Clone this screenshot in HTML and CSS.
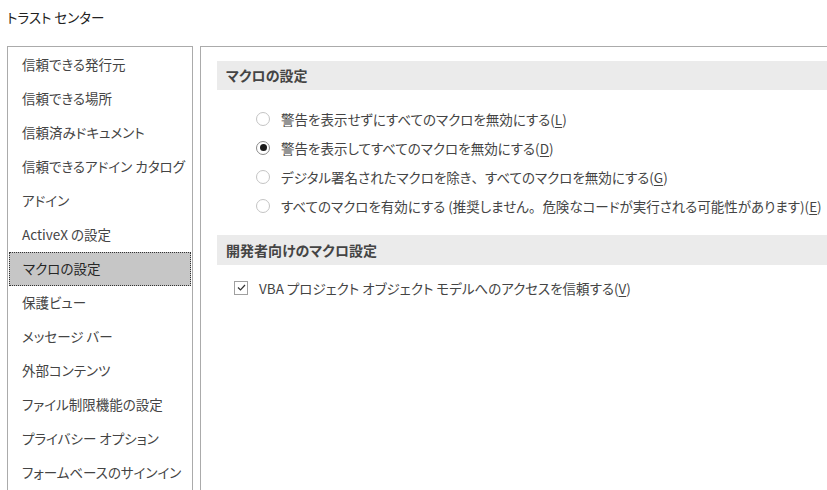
FILE: index.html
```html
<!DOCTYPE html>
<html lang="ja">
<head>
<meta charset="utf-8">
<link rel="stylesheet" href="styles.css">
</head>
<body>
<div class="title">トラスト センター</div>
<div class="panes">
  <ul class="nav">
    <li>信頼できる発行元</li>
    <li>信頼できる場所</li>
    <li>信頼済みドキュメント</li>
    <li>信頼できるアドイン カタログ</li>
    <li>アドイン</li>
    <li>ActiveX の設定</li>
    <li class="selected">マクロの設定</li>
    <li>保護ビュー</li>
    <li>メッセージ バー</li>
    <li>外部コンテンツ</li>
    <li>ファイル制限機能の設定</li>
    <li>プライバシー オプション</li>
    <li>フォームベースのサインイン</li>
    <li>&nbsp;</li>
  </ul>
  <div class="content">
    <div class="section-head">マクロの設定</div>
    <div class="options">
      <div class="opt"><span class="radio"></span><span>警告を表示せずにすべてのマクロを無効にする(<u>L</u>)</span></div>
      <div class="opt"><span class="radio checked"></span><span>警告を表示してすべてのマクロを無効にする(<u>D</u>)</span></div>
      <div class="opt"><span class="radio"></span><span>デジタル署名されたマクロを除き<span class="fw">、</span>すべてのマクロを無効にする(<u>G</u>)</span></div>
      <div class="opt"><span class="radio"></span><span>すべてのマクロを有効にする (推奨しません<span class="fw">。</span>危険なコードが実行される可能性があります)(<u>E</u>)</span></div>
    </div>
    <div class="section-head second">開発者向けのマクロ設定</div>
    <div class="checks">
      <div class="opt"><span class="check"><svg width="9" height="7" viewBox="0 0 9 7"><path d="M1 3.5 L3.5 6 L8 1" fill="none" stroke="#333" stroke-width="1.2"/></svg></span><span>VBA プロジェクト オブジェクト モデルへのアクセスを信頼する(<u>V</u>)</span></div>
    </div>
  </div>
</div>
</body>
</html>
```
FILE: styles.css
```css
html, body {
  margin: 0;
  padding: 0;
  background: #ffffff;
  overflow: hidden;
  width: 827px;
  height: 490px;
}
body {
  font-family: "Noto Sans CJK JP", "Noto Sans", sans-serif;
  font-size: 13.5px;
  font-feature-settings: "palt";
  color: #444444;
}
.fw {
  font-feature-settings: normal;
}
.title {
  height: 46px;
  line-height: 34px;
  padding-left: 7px;
  color: #222222;
}
.panes {
  display: flex;
  gap: 7px;
  padding-left: 7px;
  height: 470px;
}
.nav {
  list-style: none;
  margin: 0;
  padding: 1px 0 0 0;
  width: 184px;
  border: 1px solid #ababab;
  flex: none;
}
.nav li {
  height: 34px;
  line-height: 32px;
  padding-left: 14px;
  white-space: nowrap;
  color: #444444;
  box-sizing: border-box;
}
.nav li.selected {
  margin: 0 1px;
  padding-left: 13px;
  background: #c6c6c6;
  border: 1px dotted #333333;
  line-height: 30px;
  color: #262626;
}
.content {
  flex: 1;
  border-top: 1px solid #ababab;
  border-left: 1px solid #ababab;
  padding: 14px 0 0 16px;
  margin-right: -10px;
}
.section-head {
  height: 29px;
  line-height: 29px;
  background: #ebebeb;
  padding-left: 9px;
  font-weight: bold;
  font-size: 14px;
  color: #444444;
  white-space: nowrap;
}
.section-head.second {
  margin-top: 15px;
  height: 30px;
  line-height: 30px;
}
.options {
  margin-top: 14px;
  padding-left: 39px;
}
.checks {
  margin-top: 8px;
  padding-left: 17px;
}
.opt {
  height: 29px;
  display: flex;
  align-items: center;
  gap: 11px;
  white-space: nowrap;
}
.opt u {
  text-underline-offset: 2px;
}
.radio {
  width: 14px;
  height: 14px;
  box-sizing: border-box;
  border: 1px solid #c4c4c4;
  border-radius: 50%;
  flex: none;
  display: flex;
  align-items: center;
  justify-content: center;
}
.radio.checked {
  border-color: #8a8a8a;
}
.radio.checked::after {
  content: "";
  width: 7px;
  height: 7px;
  border-radius: 50%;
  background: #1a1a1a;
}
.check {
  width: 14px;
  height: 14px;
  box-sizing: border-box;
  border: 1px solid #a0a0a0;
  flex: none;
  display: flex;
  align-items: center;
  justify-content: center;
}
```
